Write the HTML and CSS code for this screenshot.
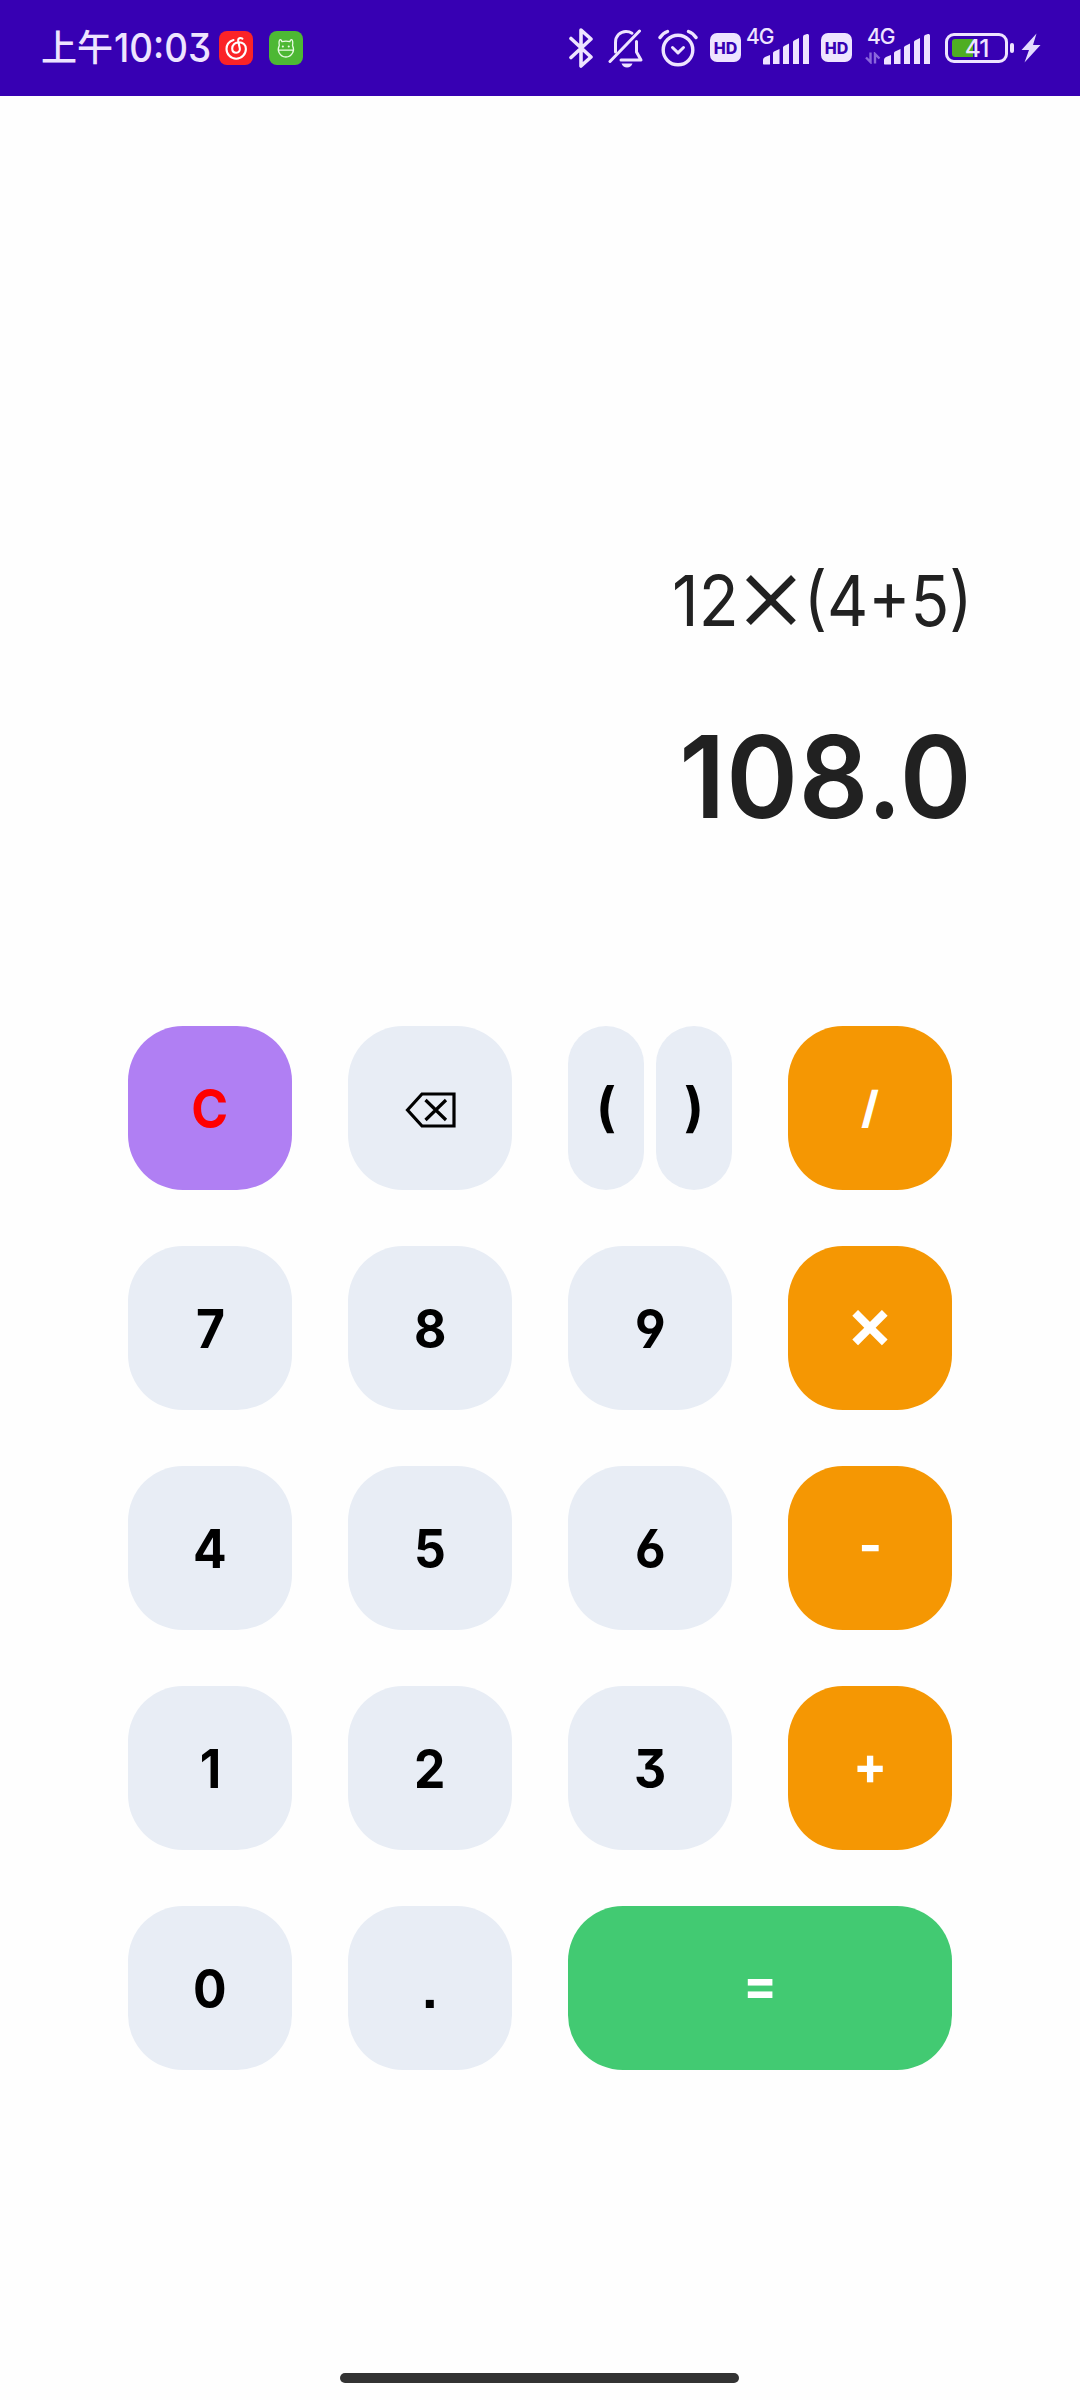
FILE: index.html
```
<!DOCTYPE html>
<html lang="zh-CN">
<head>
<meta charset="utf-8">
<title>Calculator</title>
<link rel="stylesheet" href="styles.css">
</head>
<body>
<header class="status">
  <div class="status-left">
    <span class="ampm">上午</span><span class="clock">10:03</span>
    <svg class="app" width="34" height="34" viewBox="0 0 34 34">
      <rect width="34" height="34" rx="8" fill="#fb2327"/>
      <path d="M14.500 9C10 10.500 7.500 14 7.500 18a9.700 9.700 0 0 0 19.400 0c0-4-3-6.800-7-6.800-3.700 0-6.700 2.700-6.700 6.300 0 2.500 1.700 4.200 4.100 4.200 2.500 0 4-2 3.500-4.500L19.200 10c-.5-2.800 2-3.800 4.200-2.300" fill="none" stroke="#fff" stroke-width="2.100" stroke-linecap="round"/>
    </svg>
    <svg class="app" width="34" height="34" viewBox="0 0 34 34">
      <rect width="34" height="34" rx="8" fill="#4db834"/>
      <g fill="none" stroke="#e9fbe4" stroke-width="1.300" stroke-linecap="round" stroke-linejoin="round">
        <path d="M10.300 14.500c-.6-3-.2-6 1.200-5.800.9.200 1.200 1 1.400 2q4-1.300 8 0c.2-1 .5-1.800 1.400-2 1.400-.2 1.800 2.800 1.200 5.800 1.300 2.500 1.300 5 .3 7-1.500 3-4 4.500-6.900 4.500s-5.400-1.500-6.900-4.500c-1-2-1-4.500.3-7zM9.400 19.200h15"/>
        <path d="M13.800 15.500h.1M19.700 15.500h.1" stroke-width="2"/>
      </g>
    </svg>
  </div>
  <div class="status-right">
    <svg width="26" height="40" viewBox="0 0 26 40" class="bt"><path d="M3 10.500l20 18.500-10 9V2l10 9L3 29.500" fill="none" stroke="#eee4ff" stroke-width="3.600" stroke-linecap="round" stroke-linejoin="round"/></svg>
    <svg width="36" height="40" viewBox="0 0 36 40" class="bell">
      <g fill="none" stroke="#eee4ff" stroke-width="3" stroke-linecap="round" stroke-linejoin="round">
        <path d="M2 33.500L31.500 3"/>
        <path d="M7.500 24V14.500C7.500 8 12 3.500 18 3.500q3.500 0 6 1.700"/>
        <path d="M28.500 13.500V24l4.500 8H13"/>
      </g>
      <path d="M13.500 35.500h11q-1.500 4-5.500 4t-5.500-4z" fill="#eee4ff"/>
    </svg>
    <svg width="40" height="38" viewBox="0 0 40 38" class="alarm">
      <g fill="none" stroke="#eee4ff" stroke-linecap="round" stroke-linejoin="round">
        <circle cx="20" cy="21" r="14.800" stroke-width="3.400"/>
        <path d="M14.500 18.500l5.500 5.300 5.500-5.300" stroke-width="3"/>
        <path d="M2 8.500q3-4.500 7.500-6M38 8.500q-3-4.500-7.500-6" stroke-width="3.400"/>
      </g>
    </svg>
    <span class="hd">HD</span>
    <div class="signal sig-a">
      <span class="net">4G</span>
      <svg width="65" height="32" viewBox="0 0 65 32"><path d="M1 31v-4q0-2 2-3l5-2v9q0 .5-.5.500h-6zM11 31V20q0-1 1-1.500l5.500-2.500v15zM21 31V14.500q0-1 1-1.500l5-2.500V31zM31 31V9q0-1 1-1.500l5-2.500V31zM41 31V4q0-1.500 1-2l3-1q2-.5 2 1.500V31z" fill="#eee4ff"/></svg>
    </div>
    <span class="hd">HD</span>
    <div class="signal sig-b">
      <span class="net">4G</span>
      <svg class="arrows" width="16" height="12" viewBox="0 0 16 12"><path d="M5.500.5V10L1 5.500M10 11.500V2L14.500 6.500" fill="none" stroke="#8a66dc" stroke-width="2.400"/></svg>
      <svg width="65" height="32" viewBox="0 0 65 32"><path d="M1 31v-4q0-2 2-3l5-2v9q0 .5-.5.500h-6zM11 31V20q0-1 1-1.500l5.500-2.500v15zM21 31V14.500q0-1 1-1.500l5-2.500V31zM31 31V9q0-1 1-1.500l5-2.500V31zM41 31V4q0-1.500 1-2l3-1q2-.5 2 1.500V31z" fill="#eee4ff"/></svg>
    </div>
    <div class="battery"><span class="level"></span><span class="pct">41</span></div>
    <span class="cap"></span>
    <svg width="20" height="30" viewBox="0 0 20 30" class="bolt"><path d="M15.500.5L.5 17h7.500L3.500 29.500 19.500 12H12z" fill="#e4dcff"/></svg>
  </div>
</header>
<main>
  <section class="display">
    <div class="expr"><span class="num">12</span><span class="times">×</span><span class="group">(4+5)</span></div>
    <div class="result">108.0</div>
  </section>
  <section class="pad">
    <button class="key clear"><span>C</span></button>
    <button class="key"><svg class="erase" width="52" height="38" viewBox="0 0 52 38"><path d="M2.500 19L17 3h32v32H17z M20.500 9L41 29M41 9L20.500 29" fill="none" stroke="#000" stroke-width="3.200"/></svg></button>
    <div class="pair"><button class="key half"><span>(</span></button><button class="key half"><span>)</span></button></div>
    <button class="key op slash"><span>/</span></button>
    <button class="key"><span>7</span></button>
    <button class="key"><span>8</span></button>
    <button class="key"><span>9</span></button>
    <button class="key op mul"><span>×</span></button>
    <button class="key"><span>4</span></button>
    <button class="key"><span>5</span></button>
    <button class="key"><span>6</span></button>
    <button class="key op"><span>-</span></button>
    <button class="key"><span>1</span></button>
    <button class="key"><span>2</span></button>
    <button class="key"><span>3</span></button>
    <button class="key op"><span>+</span></button>
    <button class="key"><span>0</span></button>
    <button class="key"><span>.</span></button>
    <button class="key equals"><span>=</span></button>
  </section>
</main>
<footer class="home"><span class="pill"></span></footer>
</body>
</html>
```
FILE: styles.css
```
* { box-sizing: border-box; }
body {
  margin: 0;
  width: 1080px;
  height: 2400px;
  background: #fefefe;
  font-family: Inter, "Noto Sans CJK SC", sans-serif;
  font-feature-settings: "cv03", "cv04", "cv09";
  display: flex;
  flex-direction: column;
}
.status {
  height: 96px;
  background: #3700b3;
  color: #eee4ff;
  display: flex;
  justify-content: space-between;
}
.status-left, .status-right { display: flex; align-items: flex-start; }
.status-left { padding-left: 41px; line-height: 96px; font-weight: 500; }
.ampm { width: 73px; font-size: 36px; }
.clock { width: 105px; font-size: 40px; transform: scaleX(.92); transform-origin: 0 0; }
.app { margin: 31px 16px 0 0; }
.status-right { padding-right: 39px; }
.bt { margin: 28px 14px 0 0; }
.bell { margin: 28px 14px 0 0; }
.alarm { margin: 29px 12px 0 0; }
.hd {
  width: 31px;
  height: 29px;
  margin-top: 33px;
  border-radius: 7px;
  background: #eee4ff;
  color: #3700b3;
  font-size: 16px;
  font-weight: 800;
  line-height: 30px;
  text-align: center;
}
.signal { position: relative; width: 65px; height: 96px; }
.signal svg { position: absolute; left: 15.500px; top: 33px; }
.signal .arrows { left: -2px; top: 52px; }
.net { position: absolute; left: 0; top: 26px; font-size: 21px; line-height: 21px; font-weight: 500; letter-spacing: -1px; }
.sig-a { margin: 0 10px 0 5px; }
.sig-b { margin: 0 13px 0 15px; }
.battery {
  width: 63px;
  height: 30px;
  margin-top: 33px;
  border: 3px solid #eee4ff;
  border-radius: 9px;
  position: relative;
}
.level { position: absolute; left: 4px; top: 3px; width: 21px; height: 18px; background: #4fae22; border-radius: 3px 0 0 3px; }
.pct { position: absolute; left: 0; right: 0; top: 0; text-align: center; line-height: 25px; font-size: 24.500px; font-weight: 500; letter-spacing: -1px; }
.cap { width: 4px; height: 10px; margin: 43px 7px 0 2px; border-radius: 2px; background: #eee4ff; }
.bolt { margin-top: 33px; }
main { flex: 1; }
.display {
  height: 930px;
  padding: 456px 110px 0 0;
  color: #212121;
  display: flex;
  flex-direction: column;
  align-items: flex-end;
}
.expr { display: flex; align-items: center; height: 96px; margin-right: -2px; font-size: 70.500px; }
.num { transform: scaleX(.93); transform-origin: 100% 50%; }
.times { margin: -18px 0 0 -4px; font-size: 112px; font-weight: 300; line-height: 96px; }
.group { margin-left: -22px; transform: scaleX(.905); transform-origin: 100% 50%; }
.result {
  height: 140px;
  margin: 59px -2px 0 0;
  line-height: 140px;
  font-size: 113.700px;
  font-weight: 600;
  letter-spacing: 1px;
  transform: scaleX(.957);
  transform-origin: 100% 50%;
}
.pad {
  display: grid;
  grid-template-columns: repeat(4, 164px);
  grid-auto-rows: 164px;
  gap: 56px;
  justify-content: center;
}
.key {
  border: 0;
  padding: 0;
  border-radius: 55px;
  background: #e8edf5;
  color: #000;
  font: 700 53px/164px Inter, sans-serif;
  font-feature-settings: "cv03", "cv04", "cv09", "ss07";
  display: flex;
  align-items: center;
  justify-content: center;
}
.key span { display: block; transform: translateY(1px) scaleX(.94); }
.erase { margin: 3px 0 0 1px; }
.clear { background: #b07ff3; color: #f00; }
.pair { display: flex; gap: 12px; }
.half { width: 76px; border-radius: 38px; }
.half span { transform: translateY(-1px); }
.op { background: #f59703; color: #fff; }
.op span, .equals span { transform: translateY(-3px) scaleX(.95); }
.slash span { font-size: 44px; font-weight: 800; transform: translateY(-1px); }
.mul span { font-size: 71px; font-weight: 600; transform: translateY(-6px); }
.equals { grid-column: span 2; background: #42ca72; color: #fff; }
.home { height: 27px; display: flex; justify-content: center; }
.pill { width: 399px; height: 10px; margin-right: 1px; border-radius: 5px; background: #333; }
```
